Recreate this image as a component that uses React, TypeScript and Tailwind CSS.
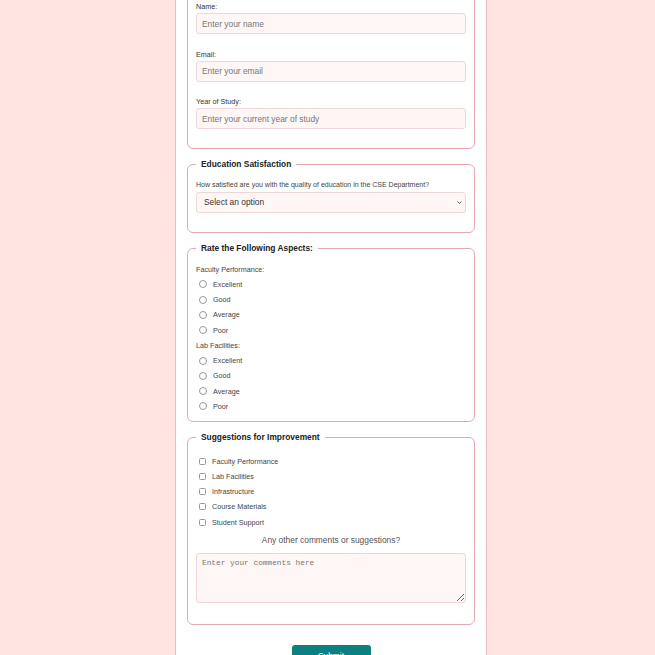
import React from "react";

const sans = "font-['Liberation_Sans',Arial,sans-serif]";

function Field({ label, placeholder }: { label: string; placeholder: string }) {
  return (
    <div className="flex flex-col">
      <label className="text-[7.2px] leading-[9px] text-[#333] mb-[2px]">{label}</label>
      <input
        placeholder={placeholder}
        className="h-[21px] w-full rounded-[3px] border border-[#f0d6d9] bg-[#fff6f6] px-[5px] text-[8.4px] text-[#333] placeholder:text-[#777] outline-none"
      />
    </div>
  );
}

function Legend({ children }: { children: React.ReactNode }) {
  return (
    <legend className="px-[5px] text-[8.4px] leading-[10px] font-bold text-[#222]">{children}</legend>
  );
}

function Choice({ type, name, label }: { type: "radio" | "checkbox"; name: string; label: string }) {
  return (
    <label className="flex h-[15.25px] items-center text-[7.2px] text-[#444]">
      <input
        type={type}
        name={name}
        className={
          type === "radio"
            ? "ml-[3px] mr-[6px] -mt-[2px] h-[8px] w-[8px] appearance-none rounded-full border border-[#999] bg-white"
            : "ml-[3px] mr-[6px] -mt-[2px] h-[7px] w-[7px] appearance-none rounded-[1.5px] border border-[#999] bg-white"
        }
      />
      {label}
    </label>
  );
}

const fieldset = "rounded-[6px] border border-[#e4a9b0] px-[8px]";

export default function App() {
  const levels = ["Excellent", "Good", "Average", "Poor"];
  const topics = ["Faculty Performance", "Lab Facilities", "Infrastructure", "Course Materials", "Student Support"];

  return (
    <div className={`flex min-h-[760px] flex-col items-start bg-[#ffe4e1] ${sans}`}>
      <form className="-mt-[32px] ml-[175px] flex w-[312px] flex-col gap-[10px] border border-[#ecbcc1] bg-white px-[11px] pt-[12px] pb-[40px]">
        <fieldset className={`${fieldset} pt-[11px] pb-[19px]`}>
          <Legend>Personal Information</Legend>
          <div className="flex flex-col gap-[15.5px]">
            <Field label="Name:" placeholder="Enter your name" />
            <Field label="Email:" placeholder="Enter your email" />
            <Field label="Year of Study:" placeholder="Enter your current year of study" />
          </div>
        </fieldset>

        <fieldset className={`${fieldset} pt-[11px] pb-[19px]`}>
          <Legend>Education Satisfaction</Legend>
          <label className="block text-[7px] leading-[9px] text-[#444] mb-[3px]">
            How satisfied are you with the quality of education in the CSE Department?
          </label>
          <div className="relative">
            <select
              defaultValue=""
              className="block h-[21px] w-full appearance-none rounded-[3px] border border-[#f0d6d9] bg-[#fff6f6] px-[7px] text-[8.4px] text-[#333] outline-none"
            >
              <option value="">Select an option</option>
              <option>Very Satisfied</option>
              <option>Satisfied</option>
              <option>Neutral</option>
              <option>Dissatisfied</option>
            </select>
            <svg
              viewBox="0 0 10 6"
              className="pointer-events-none absolute right-[4px] top-[9px] h-[3px] w-[5px]"
              fill="none"
              stroke="#333"
              strokeWidth="1.6"
            >
              <path d="M1 1l4 4 4-4" />
            </svg>
          </div>
        </fieldset>

        <fieldset className={`${fieldset} pt-[9.5px] pb-[6px]`}>
          <Legend>Rate the Following Aspects:</Legend>
          <div className="flex h-[15.25px] items-center text-[7.2px] text-[#444]">Faculty Performance:</div>
          {levels.map((l) => (
            <Choice key={"f" + l} type="radio" name="faculty" label={l} />
          ))}
          <div className="flex h-[15.25px] items-center text-[7.2px] text-[#444]">Lab Facilities:</div>
          {levels.map((l) => (
            <Choice key={"l" + l} type="radio" name="lab" label={l} />
          ))}
        </fieldset>

        <fieldset className={`${fieldset} pt-[12.5px] pb-[21.5px]`}>
          <Legend>Suggestions for Improvement</Legend>
          {topics.map((t) => (
            <Choice key={t} type="checkbox" name="suggest" label={t} />
          ))}
          <p className="mt-[4px] mb-[8px] text-center text-[8.4px] leading-[10px] text-[#555]">
            Any other comments or suggestions?
          </p>
          <textarea
            placeholder="Enter your comments here"
            className="block h-[50px] w-full rounded-[3px] border border-[#f0d6d9] bg-[#fff6f6] px-[5px] py-[4px] font-['Liberation_Mono',monospace] text-[7.8px] text-[#333] placeholder:text-[#777] outline-none"
          />
        </fieldset>

        <div className="mt-[10px] flex justify-center">
          <button
            type="submit"
            className="h-[22px] w-[79px] rounded-[3px] bg-[#0a8080] text-[8.4px] text-white"
          >
            Submit
          </button>
        </div>
      </form>
    </div>
  );
}
